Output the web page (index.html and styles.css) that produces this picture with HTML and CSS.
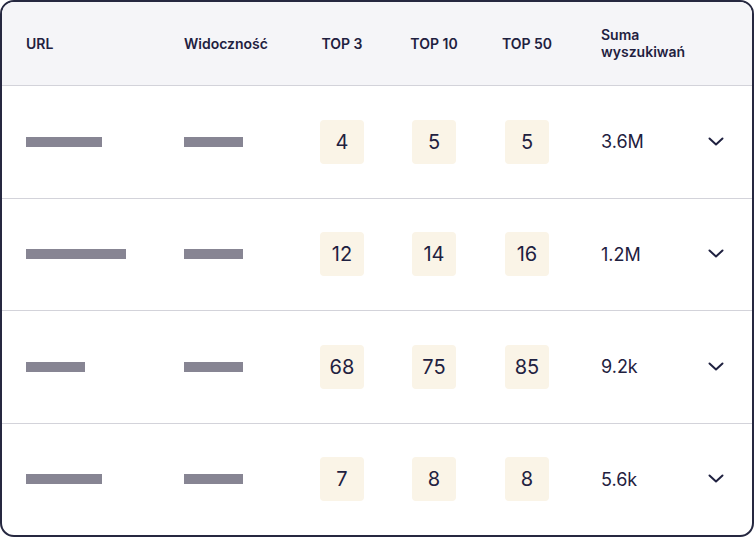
FILE: index.html
```html
<!DOCTYPE html>
<html lang="pl">
<head>
<meta charset="utf-8">
<title>Tabela</title>
<link rel="stylesheet" href="styles.css">
</head>
<body>
<div class="card">
  <div class="row head">
    <div class="cell">URL</div>
    <div class="cell">Widoczność</div>
    <div class="cell"><span class="c">TOP 3</span></div>
    <div class="cell"><span class="c">TOP 10</span></div>
    <div class="cell"><span class="c">TOP 50</span></div>
    <div class="cell sum">Suma<br>wyszukiwań</div>
    <div class="cell"></div>
  </div>

  <div class="row">
    <div class="cell"><span class="bar" style="width:76px"></span></div>
    <div class="cell"><span class="bar" style="width:59px"></span></div>
    <div class="cell"><span class="box">4</span></div>
    <div class="cell"><span class="box">5</span></div>
    <div class="cell"><span class="box">5</span></div>
    <div class="cell val">3.6M</div>
    <div class="cell"><svg class="chev" viewBox="0 0 16 10" width="16" height="10"><polyline points="1.5,1.5 8,7.5 14.5,1.5"/></svg></div>
  </div>

  <div class="row">
    <div class="cell"><span class="bar" style="width:100px"></span></div>
    <div class="cell"><span class="bar" style="width:59px"></span></div>
    <div class="cell"><span class="box">12</span></div>
    <div class="cell"><span class="box">14</span></div>
    <div class="cell"><span class="box">16</span></div>
    <div class="cell val">1.2M</div>
    <div class="cell"><svg class="chev" viewBox="0 0 16 10" width="16" height="10"><polyline points="1.5,1.5 8,7.5 14.5,1.5"/></svg></div>
  </div>

  <div class="row">
    <div class="cell"><span class="bar" style="width:59px"></span></div>
    <div class="cell"><span class="bar" style="width:59px"></span></div>
    <div class="cell"><span class="box">68</span></div>
    <div class="cell"><span class="box">75</span></div>
    <div class="cell"><span class="box">85</span></div>
    <div class="cell val">9.2k</div>
    <div class="cell"><svg class="chev" viewBox="0 0 16 10" width="16" height="10"><polyline points="1.5,1.5 8,7.5 14.5,1.5"/></svg></div>
  </div>

  <div class="row">
    <div class="cell"><span class="bar" style="width:76px"></span></div>
    <div class="cell"><span class="bar" style="width:59px"></span></div>
    <div class="cell"><span class="box">7</span></div>
    <div class="cell"><span class="box">8</span></div>
    <div class="cell"><span class="box">8</span></div>
    <div class="cell val">5.6k</div>
    <div class="cell"><svg class="chev" viewBox="0 0 16 10" width="16" height="10"><polyline points="1.5,1.5 8,7.5 14.5,1.5"/></svg></div>
  </div>
</div>
</body>
</html>
```

FILE: styles.css
```css
* { box-sizing: border-box; }
html, body { margin: 0; padding: 0; background: #ffffff; }
body {
  font-family: "Inter", "Liberation Sans", sans-serif;
  color: #1f2140;
}
.card {
  width: 754px;
  height: 537px;
  border: 2px solid #262840;
  border-radius: 14px;
  overflow: hidden;
  display: flex;
  flex-direction: column;
  background: #fff;
}
.row {
  display: grid;
  grid-template-columns: 158px 136px 92px 93px 96px 1fr 24px;
  align-items: center;
  padding: 0 20px 0 24px;
  flex: 1 1 0;
  border-bottom: 1px solid #d3d3da;
}
.row:last-child { border-bottom: none; }
.row.head {
  flex: 0 0 84px;
  background: #f5f5f8;
  font-size: 14px;
  font-weight: 600;
  letter-spacing: 0;
}
.cell { display: flex; align-items: center; }
.c {
  width: 44px;
  display: flex;
  justify-content: center;
  white-space: nowrap;
}
.sum { display: block; line-height: 17px; padding-bottom: 1px; }
.bar {
  display: block;
  height: 10px;
  background: #878593;
}
.box {
  width: 44px;
  height: 44px;
  border-radius: 4px;
  background: #faf4e7;
  display: flex;
  align-items: center;
  justify-content: center;
  font-size: 20px;
}
.val { font-size: 18px; }
.chev {
  display: block;
  fill: none;
  stroke: #1f2140;
  stroke-width: 2;
  stroke-linecap: round;
  stroke-linejoin: round;
}
```
